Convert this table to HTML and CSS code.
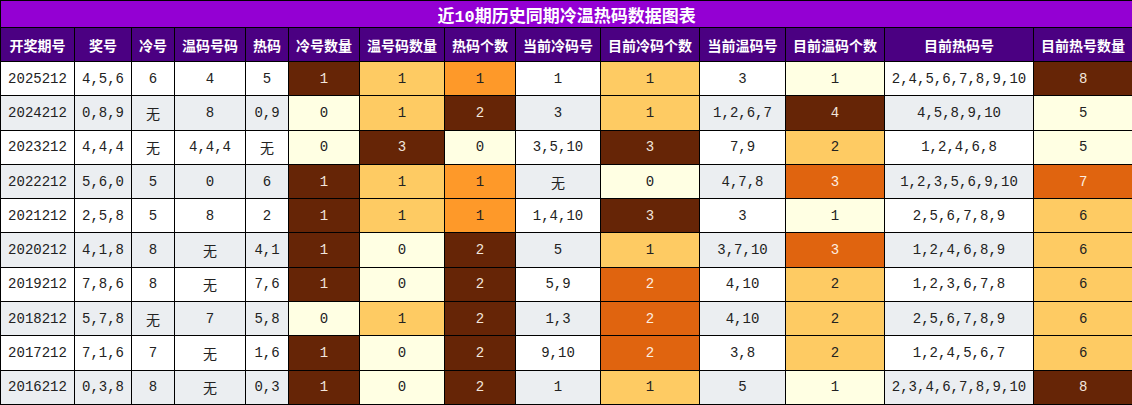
FILE: index.html
```html
<!DOCTYPE html>
<html lang="zh">
<head>
<meta charset="utf-8">
<title>近10期历史同期冷温热码数据图表</title>
<link rel="stylesheet" href="styles.css">
</head>
<body>
<table class="chart">
<colgroup>
<col class="w74"><col class="w57"><col class="w43"><col class="w71"><col class="w43"><col class="w71"><col class="w85"><col class="w71"><col class="w85"><col class="w99"><col class="w86"><col class="w99"><col class="w149"><col class="w99">
</colgroup>
<thead>
<tr class="title-row"><th colspan="14">近10期历史同期冷温热码数据图表</th></tr>
<tr class="head-row">
<th>开奖期号</th><th>奖号</th><th>冷号</th><th>温码号码</th><th>热码</th><th>冷号数量</th><th>温号码数量</th><th>热码个数</th><th>当前冷码号</th><th>目前冷码个数</th><th>当前温码号</th><th>目前温码个数</th><th>目前热码号</th><th>目前热号数量</th>
</tr>
</thead>
<tbody>
<tr><td>2025212</td><td>4,5,6</td><td>6</td><td>4</td><td>5</td><td class="dk">1</td><td class="lo">1</td><td class="or">1</td><td>1</td><td class="lo">1</td><td>3</td><td class="cr">1</td><td>2,4,5,6,7,8,9,10</td><td class="dk">8</td></tr>
<tr><td>2024212</td><td>0,8,9</td><td>无</td><td>8</td><td>0,9</td><td class="cr">0</td><td class="lo">1</td><td class="dk">2</td><td>3</td><td class="lo">1</td><td>1,2,6,7</td><td class="dk">4</td><td>4,5,8,9,10</td><td class="cr">5</td></tr>
<tr><td>2023212</td><td>4,4,4</td><td>无</td><td>4,4,4</td><td>无</td><td class="cr">0</td><td class="dk">3</td><td class="cr">0</td><td>3,5,10</td><td class="dk">3</td><td>7,9</td><td class="lo">2</td><td>1,2,4,6,8</td><td class="cr">5</td></tr>
<tr><td>2022212</td><td>5,6,0</td><td>5</td><td>0</td><td>6</td><td class="dk">1</td><td class="lo">1</td><td class="or">1</td><td>无</td><td class="cr">0</td><td>4,7,8</td><td class="do">3</td><td>1,2,3,5,6,9,10</td><td class="do">7</td></tr>
<tr><td>2021212</td><td>2,5,8</td><td>5</td><td>8</td><td>2</td><td class="dk">1</td><td class="lo">1</td><td class="or">1</td><td>1,4,10</td><td class="dk">3</td><td>3</td><td class="cr">1</td><td>2,5,6,7,8,9</td><td class="lo">6</td></tr>
<tr><td>2020212</td><td>4,1,8</td><td>8</td><td>无</td><td>4,1</td><td class="dk">1</td><td class="cr">0</td><td class="dk">2</td><td>5</td><td class="lo">1</td><td>3,7,10</td><td class="do">3</td><td>1,2,4,6,8,9</td><td class="lo">6</td></tr>
<tr><td>2019212</td><td>7,8,6</td><td>8</td><td>无</td><td>7,6</td><td class="dk">1</td><td class="cr">0</td><td class="dk">2</td><td>5,9</td><td class="do">2</td><td>4,10</td><td class="lo">2</td><td>1,2,3,6,7,8</td><td class="lo">6</td></tr>
<tr><td>2018212</td><td>5,7,8</td><td>无</td><td>7</td><td>5,8</td><td class="cr">0</td><td class="lo">1</td><td class="dk">2</td><td>1,3</td><td class="do">2</td><td>4,10</td><td class="lo">2</td><td>2,5,6,7,8,9</td><td class="lo">6</td></tr>
<tr><td>2017212</td><td>7,1,6</td><td>7</td><td>无</td><td>1,6</td><td class="dk">1</td><td class="cr">0</td><td class="dk">2</td><td>9,10</td><td class="do">2</td><td>3,8</td><td class="lo">2</td><td>1,2,4,5,6,7</td><td class="lo">6</td></tr>
<tr><td>2016212</td><td>0,3,8</td><td>8</td><td>无</td><td>0,3</td><td class="dk">1</td><td class="cr">0</td><td class="dk">2</td><td>1</td><td class="lo">1</td><td>5</td><td class="cr">1</td><td>2,3,4,6,7,8,9,10</td><td class="dk">8</td></tr>
</tbody>
</table>
</body>
</html>
```

FILE: styles.css
```css
html, body {
  margin: 0;
  padding: 0;
  background: #ffffff;
}

.chart {
  width: 1132px;
  table-layout: fixed;
  border-collapse: collapse;
  font-family: "Liberation Mono", "Noto Sans CJK SC", monospace;
  font-size: 14px;
  color: #222222;
}

.w74 { width: 74px; }
.w57 { width: 57px; }
.w43 { width: 43px; }
.w71 { width: 71px; }
.w85 { width: 85px; }
.w86 { width: 86px; }
.w99 { width: 99px; }
.w149 { width: 149px; }

.chart th,
.chart td {
  border: 1px solid #000000;
  padding: 0;
  text-align: center;
  vertical-align: middle;
  white-space: nowrap;
  overflow: hidden;
}

.title-row th {
  height: 26px;
  background: #9400d3;
  color: #ffffff;
  font-size: 17px;
  font-weight: bold;
  font-family: "Liberation Mono", "Noto Sans CJK SC", monospace;
}

.head-row th {
  height: 33px;
  background: #4b0082;
  color: #ffffff;
  font-size: 14px;
  font-weight: bold;
  font-family: "Noto Sans CJK SC", "Liberation Sans", sans-serif;
}

.chart tbody tr {
  height: 34.3px;
}

.chart tbody tr:nth-child(odd) td {
  background: #ffffff;
}

.chart tbody tr:nth-child(even) td {
  background: #ebeef1;
}

.chart tbody tr td.dk {
  background: #662506;
  color: #f2e6dc;
}

.chart tbody tr td.do {
  background: #e0640f;
  color: #fdeee0;
}

.chart tbody tr td.or {
  background: #fe9929;
  color: #222222;
}

.chart tbody tr td.lo {
  background: #fecb63;
  color: #222222;
}

.chart tbody tr td.cr {
  background: #ffffe3;
  color: #222222;
}
```
